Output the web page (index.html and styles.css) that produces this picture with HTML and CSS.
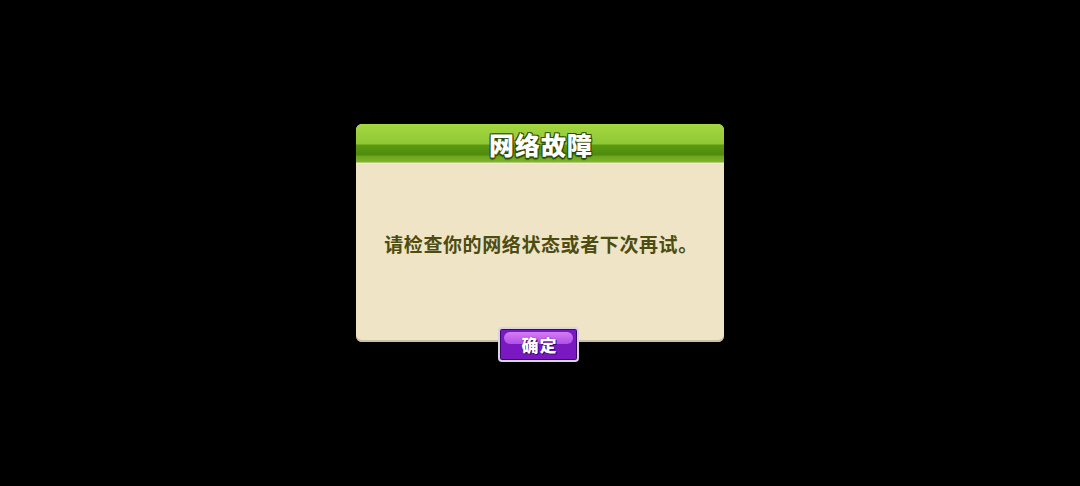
FILE: index.html
```html
<!DOCTYPE html>
<html>
<head>
<meta charset="utf-8">
<link rel="stylesheet" href="styles.css">
</head>
<body>
<div class="screen">
  <div class="dialog">
    <div class="header">
      <span class="title">网络故障</span>
    </div>
    <div class="body">
      <p class="message">请检查你的网络状态或者下次再试。</p>
    </div>
    <div class="button-row">
      <button class="ok"><span class="shine"></span><span class="label">确定</span></button>
    </div>
  </div>
</div>
</body>
</html>
```
FILE: styles.css
```css
html, body {
  margin: 0;
  padding: 0;
  background: #000;
  width: 1080px;
  height: 486px;
  overflow: hidden;
  font-family: "Noto Sans CJK SC", "Noto Sans", sans-serif;
}
.screen {
  width: 1080px;
  height: 486px;
  display: flex;
  justify-content: center;
  padding-top: 124px;
  box-sizing: border-box;
}
.dialog {
  width: 368px;
  height: 218px;
  position: relative;
  border-radius: 6px;
  background: #efe5c6;
  box-shadow: inset 0 -2px 0 #c9c0a2;
  display: flex;
  flex-direction: column;
}
.header {
  height: 40px;
  border-radius: 6px 6px 0 0;
  background: linear-gradient(to bottom,
    #a4d740 0px, #8fc834 20px, #5c9a12 21px, #4f8b0c 31px, #6aa51c 32px, #7fb42a 38px, #e6ebc4 39px, #f3efd2 40px);
  display: flex;
  justify-content: center;
  align-items: center;
}
.title {
  color: #fff;
  font-size: 25px;
  font-weight: 900;
  letter-spacing: 1px;
  line-height: 1;
  margin-top: 1px;
  margin-left: 2px;
  text-shadow: -1px -1px 0 #2e4a06, 1px -1px 0 #2e4a06, -1px 1px 0 #2e4a06, 1px 1px 0 #2e4a06, 0 2px 1px #2e4a06;
}
.body {
  flex: 1;
  display: flex;
  justify-content: center;
  align-items: center;
  padding-bottom: 20px;
}
.message {
  margin: 0;
  color: #4d4c12;
  font-size: 19px;
  font-weight: 700;
  letter-spacing: 0.6px;
  margin-left: 2px;
}
.button-row {
  position: absolute;
  left: 142px;
  top: 203px;
}
.ok {
  position: relative;
  width: 81px;
  height: 35px;
  padding: 0;
  border: 2px solid #d8d4e0;
  border-radius: 4px;
  background: #7a18c2;
  box-shadow: inset 0 0 0 1px #3c0a66;
  display: flex;
  justify-content: center;
  align-items: center;
  box-sizing: border-box;
}
.shine {
  position: absolute;
  left: 4px;
  right: 4px;
  top: 3px;
  height: 12px;
  border-radius: 6px;
  background: linear-gradient(to bottom, #d57cf5, #b04ee6);
}
.label {
  position: relative;
  color: #fff;
  font-size: 17px;
  font-weight: 900;
  letter-spacing: 1px;
  line-height: 1;
  margin-left: 2px;
  font-family: "Noto Sans CJK SC", sans-serif;
  text-shadow: 0 0 1px #3c0a66, 1px 1px 0 #3c0a66;
}
```
